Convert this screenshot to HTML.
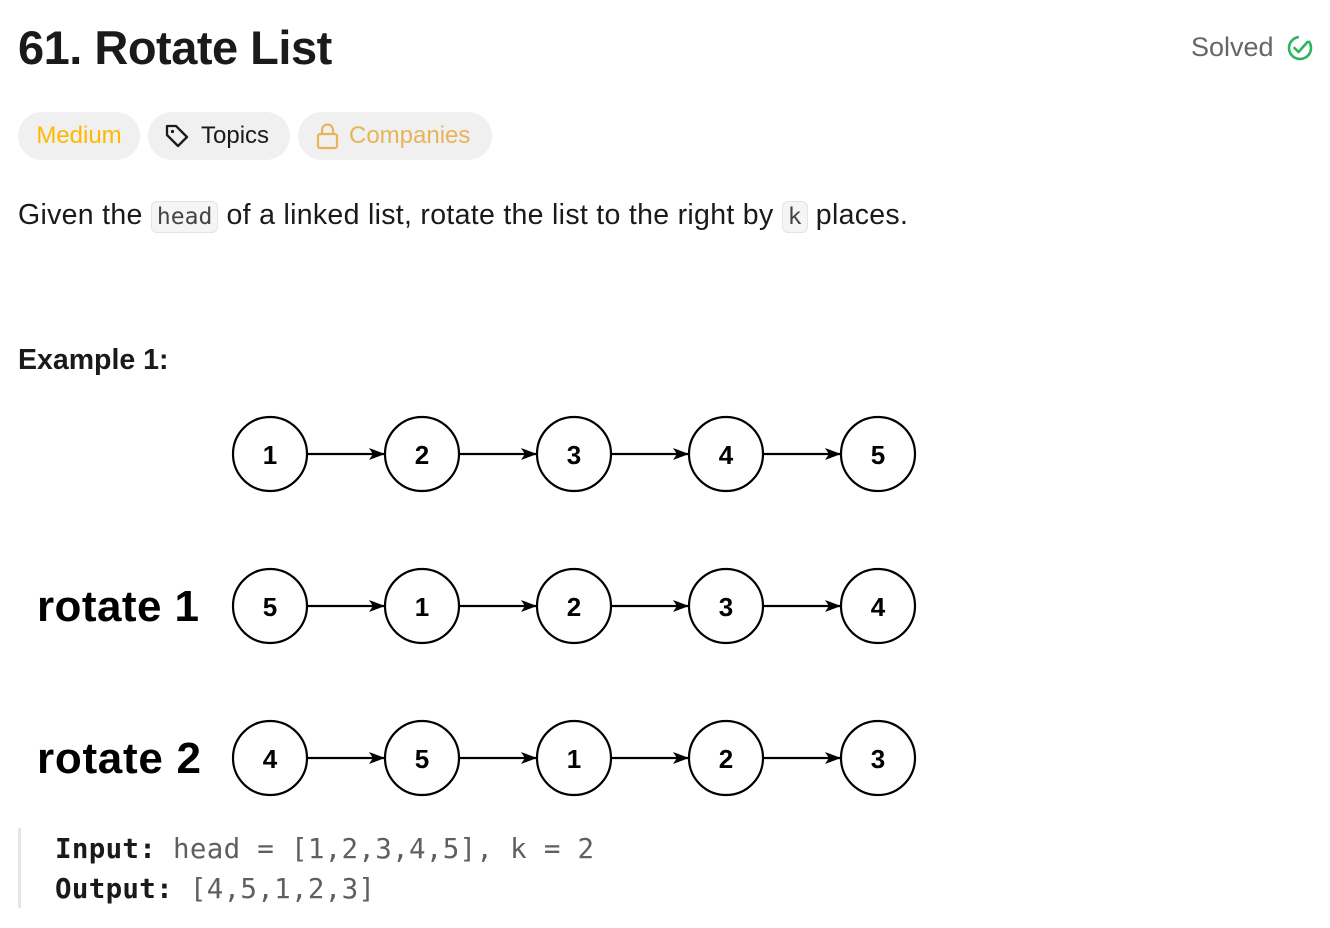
<!DOCTYPE html>
<html><head><meta charset="utf-8"><style>
body{margin:0;background:#fff;font-family:"Liberation Sans",sans-serif;color:#1a1a1a;width:1330px;height:928px;overflow:hidden;position:relative}
.a{position:absolute;white-space:nowrap}
.pill{position:absolute;top:112px;height:48px;border-radius:24px;background:#f0f0f0;font-size:24px;line-height:48px;box-sizing:border-box}
.code{font-family:"DejaVu Sans Mono","Liberation Mono",monospace;font-size:23px;background:#f5f5f5;border:1.5px solid #e4e4e4;border-radius:6px;padding:2px 5px;color:#444;letter-spacing:0}
</style></head><body>
<div class="a" style="left:18px;top:20px;font-size:47px;font-weight:bold;letter-spacing:-0.5px">61. Rotate List</div>
<div class="a" style="left:1191px;top:32px;font-size:27px;color:#666">Solved</div>
<svg class="a" style="left:1286px;top:34px" width="28" height="28" viewBox="0 0 28 28"><circle cx="14" cy="14" r="11" fill="none" stroke="#2db55d" stroke-width="2.6" stroke-dasharray="58 12" transform="rotate(-40 14 14)"/><path d="M8.5 14l4 4 9-10" fill="none" stroke="#2db55d" stroke-width="2.6" stroke-linecap="round" stroke-linejoin="round"/></svg>
<div class="pill" style="left:18px;width:122px;color:#ffb800;text-align:center">Medium</div>
<div class="pill" style="left:148px;width:142px;padding-left:53px">Topics</div>
<svg class="a" style="left:163px;top:122px" width="28" height="28" viewBox="0 0 28 28"><path d="M4 4h9l11 11-9 9L4 13z" fill="none" stroke="#1a1a1a" stroke-width="2.3" stroke-linejoin="round"/><circle cx="9.5" cy="9.5" r="1.6" fill="#1a1a1a"/></svg>
<div class="pill" style="left:298px;width:194px;padding-left:51px;color:#e8b45a">Companies</div>
<svg class="a" style="left:315px;top:122px" width="26" height="28" viewBox="0 0 26 28"><rect x="3" y="12" width="19" height="14" rx="2" fill="none" stroke="#e8b45a" stroke-width="2.2"/><path d="M7 12V8a5.5 5.5 0 0 1 11 0v4" fill="none" stroke="#e8b45a" stroke-width="2.2"/></svg>
<div class="a" style="left:18px;top:197px;font-size:28.5px;line-height:36px;letter-spacing:0.3px">Given the <span class="code">head</span> of a linked list, rotate the list to the right by <span class="code">k</span> places.</div>
<div class="a" style="left:18px;top:344px;font-size:28.5px;font-weight:bold">Example 1:</div>
<svg class="a" style="left:0;top:400px" width="960" height="400" viewBox="0 400 960 400" font-family="Liberation Sans,sans-serif" font-weight="bold">
<defs><marker id="m" markerUnits="userSpaceOnUse" markerWidth="16" markerHeight="14" refX="15" refY="7" orient="auto"><path d="M0 1L16 7L0 13L4 7z" fill="#000"/></marker></defs>
<g stroke="#000" stroke-width="2.2" fill="none">
<g id="row">
<circle cx="270" cy="454" r="37"/><circle cx="422" cy="454" r="37"/><circle cx="574" cy="454" r="37"/><circle cx="726" cy="454" r="37"/><circle cx="878" cy="454" r="37"/>
<path d="M307 454H384" marker-end="url(#m)"/><path d="M459 454H536" marker-end="url(#m)"/><path d="M611 454H688" marker-end="url(#m)"/><path d="M763 454H840" marker-end="url(#m)"/>
</g>
<use href="#row" y="152"/><use href="#row" y="304"/>
</g>
<g font-size="26" text-anchor="middle" fill="#000">
<text x="270" y="464">1</text><text x="422" y="464">2</text><text x="574" y="464">3</text><text x="726" y="464">4</text><text x="878" y="464">5</text>
<text x="270" y="616">5</text><text x="422" y="616">1</text><text x="574" y="616">2</text><text x="726" y="616">3</text><text x="878" y="616">4</text>
<text x="270" y="768">4</text><text x="422" y="768">5</text><text x="574" y="768">1</text><text x="726" y="768">2</text><text x="878" y="768">3</text>
</g>
<g font-size="44" fill="#000"><text x="37" y="621" textLength="162">rotate 1</text><text x="37" y="773" textLength="164">rotate 2</text></g>
</svg>
<div class="a" style="left:18px;top:828px;width:3px;height:80px;background:#e6e6e6"></div>
<div class="a" style="left:55px;top:829px;font-family:'DejaVu Sans Mono','Liberation Mono',monospace;font-size:27.5px;line-height:40px;color:#5f5f5f;letter-spacing:0.3px"><b style="color:#1a1a1a">Input:</b> head = [1,2,3,4,5], k = 2<br><b style="color:#1a1a1a">Output:</b> [4,5,1,2,3]</div>
</body></html>
